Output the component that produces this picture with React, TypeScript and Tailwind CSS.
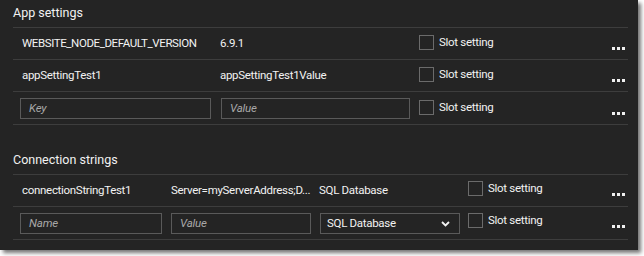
import React from "react";

const font = { fontFamily: 'Roboto, "Noto Sans", sans-serif' };

const Checkbox = () => (
  <span className="block w-[15px] h-[15px] border border-[#6b6b6b] shrink-0" />
);

const Dots = () => (
  <div className="flex gap-[2px] mt-[12px]">
    <span className="w-[3px] h-[3px] bg-[#f0f0f0]" />
    <span className="w-[3px] h-[3px] bg-[#f0f0f0]" />
    <span className="w-[3px] h-[3px] bg-[#f0f0f0]" />
  </div>
);

const SlotSetting = () => (
  <div className="flex items-start gap-[5px]">
    <Checkbox />
    <span className="text-[11.5px] tracking-[-0.3px] leading-[14px] text-[#f2f2f2]">Slot setting</span>
  </div>
);

const Field = ({ placeholder, width }: { placeholder: string; width: string }) => (
  <div
    className={`${width} h-[21px] border border-[#5a5a5a] flex items-center pl-[8px] text-[11.5px] tracking-[-0.2px] italic text-[#a8a8a8]`}
  >
    {placeholder}
  </div>
);

export default function App() {
  return (
    <div className="w-[644px] h-[256px] bg-white overflow-hidden" style={font}>
      <div className="w-[638px] h-[250px] bg-[#242424] shadow-[3px_3px_4px_rgba(0,0,0,0.55)] text-[#f2f2f2]">
        <div className="ml-[13px] w-[615px]">
          {/* App settings */}
          <div className="h-[28px] border-b border-[#3d3d3d] text-[12.5px] leading-[24px] pt-[1px]">
            App settings
          </div>

          <div className="h-[32px] border-b border-[#3d3d3d] flex items-start text-[11.5px] tracking-[-0.3px] leading-[30px]">
            <span className="ml-[9px] w-[198px] whitespace-nowrap tracking-[-0.4px]">WEBSITE_NODE_DEFAULT_VERSION</span>
            <span className="w-[199px]">6.9.1</span>
            <div className="mt-[7px]">
              <SlotSetting />
            </div>
            <div className="ml-auto mr-[3px] mt-[7px]">
              <Dots />
            </div>
          </div>

          <div className="h-[32px] border-b border-[#3d3d3d] flex items-start text-[11.5px] tracking-[-0.3px] leading-[30px]">
            <span className="ml-[9px] w-[198px]">appSettingTest1</span>
            <span className="w-[199px]">appSettingTest1Value</span>
            <div className="mt-[7px]">
              <SlotSetting />
            </div>
            <div className="ml-auto mr-[3px] mt-[7px]">
              <Dots />
            </div>
          </div>

          <div className="h-[33px] border-b border-[#3d3d3d] flex items-start">
            <div className="ml-[7px] mt-[6px] flex gap-[10px]">
              <Field placeholder="Key" width="w-[191px]" />
              <Field placeholder="Value" width="w-[189px]" />
            </div>
            <div className="ml-[9px] mt-[8px]">
              <SlotSetting />
            </div>
            <div className="ml-auto mr-[3px] mt-[8px]">
              <Dots />
            </div>
          </div>

          {/* Connection strings */}
          <div className="mt-[22px] h-[28px] border-b border-[#3d3d3d] text-[12.5px] leading-[24px] pt-[1px]">
            Connection strings
          </div>

          <div className="h-[32px] border-b border-[#3d3d3d] flex items-start text-[11.5px] tracking-[-0.3px] leading-[31px]">
            <span className="ml-[9px] w-[149px] whitespace-nowrap">connectionStringTest1</span>
            <span className="w-[148px] whitespace-nowrap">Server=myServerAddress;D...</span>
            <span className="w-[149px] whitespace-nowrap">SQL Database</span>
            <div className="mt-[6px]">
              <SlotSetting />
            </div>
            <div className="ml-auto mr-[3px] mt-[6px]">
              <Dots />
            </div>
          </div>

          <div className="h-[33px] border-b border-[#3d3d3d] flex items-start">
            <div className="ml-[7px] mt-[6px] flex gap-[9px]">
              <Field placeholder="Name" width="w-[142px]" />
              <Field placeholder="Value" width="w-[140px]" />
              <div className="w-[140px] h-[21px] border border-[#5a5a5a] flex items-center pl-[6px] pr-[9px] text-[11.5px] tracking-[-0.3px] text-[#f2f2f2]">
                <span className="flex-1">SQL Database</span>
                <svg width="9" height="6" viewBox="0 0 9 6" fill="none">
                  <path d="M1 1 L4.5 4.5 L8 1" stroke="#f2f2f2" strokeWidth="1.8" />
                </svg>
              </div>
            </div>
            <div className="ml-[8px] mt-[6px]">
              <SlotSetting />
            </div>
            <div className="ml-auto mr-[3px] mt-[6px]">
              <Dots />
            </div>
          </div>
        </div>
      </div>
    </div>
  );
}
